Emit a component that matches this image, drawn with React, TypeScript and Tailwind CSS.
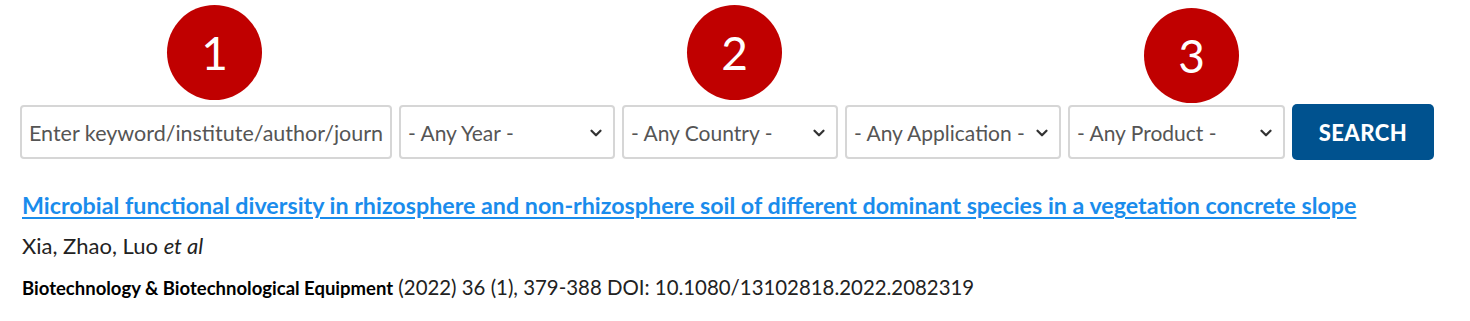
import { ChevronDown } from 'lucide-react';

const font = { fontFamily: '"Lato", "Open Sans", sans-serif' };

function Badge({ n, left, top }: { n: number; left: number; top: number }) {
  return (
    <div
      className="absolute w-[95px] h-[95px] rounded-full bg-[#c00000] flex items-center justify-center text-white text-[46px] leading-none"
      style={{ left, top }}
    >
      {n}
    </div>
  );
}

function Select({ label, width }: { label: string; width: number }) {
  return (
    <div
      className="h-[54px] flex items-center justify-between pl-[7px] pr-[8px] pt-[2px] border-2 border-[#d6d6d6] rounded-[4px] bg-white text-[21px] text-[#555]"
      style={{ width }}
    >
      <span className="whitespace-nowrap">{label}</span>
      <ChevronDown className="w-[18px] h-[18px] text-[#333] flex-none" strokeWidth={3} />
    </div>
  );
}

export default function App() {
  return (
    <div className="w-[1470px] h-[321px] bg-white relative" style={font}>
      <div className="relative h-[104px]">
        <Badge n={1} left={167} top={5} />
        <Badge n={2} left={687} top={5} />
        <Badge n={3} left={1144} top={8} />
      </div>
      <div className="flex items-center gap-[7px] pl-[20px]">
        <input
          type="text"
          placeholder="Enter keyword/institute/author/journal"
          className="w-[372px] h-[54px] px-[7px] pt-[2px] border-2 border-[#d6d6d6] rounded-[4px] text-[21.5px] text-[#555] placeholder:text-[#555] outline-none"
          style={font}
        />
        <Select label="- Any Year -" width={216} />
        <Select label="- Any Country -" width={216} />
        <Select label="- Any Application -" width={216} />
        <Select label="- Any Product -" width={217} />
        <button className="w-[142px] h-[56px] rounded-[5px] bg-[#00528f] text-white font-black text-[22px] tracking-[0.5px]">
          SEARCH
        </button>
      </div>
      <div className="pl-[22px] pt-[31px]">
        <a href="#" className="text-[#1a8cec] font-bold text-[23.25px] underline underline-offset-[3px] leading-[28px] block">
          Microbial functional diversity in rhizosphere and non-rhizosphere soil of different dominant species in a vegetation concrete slope
        </a>
        <div className="mt-[13px] text-[22px] text-[#222] leading-[28px]">
          Xia, Zhao, Luo <i>et al</i>
        </div>
        <div className="mt-[13px] text-[20.4px] text-[#222] leading-[28px]">
          <b className="text-[18.5px] text-black">Biotechnology &amp; Biotechnological Equipment</b> (2022) 36 (1), 379-388 DOI: 10.1080/13102818.2022.2082319
        </div>
      </div>
    </div>
  );
}
